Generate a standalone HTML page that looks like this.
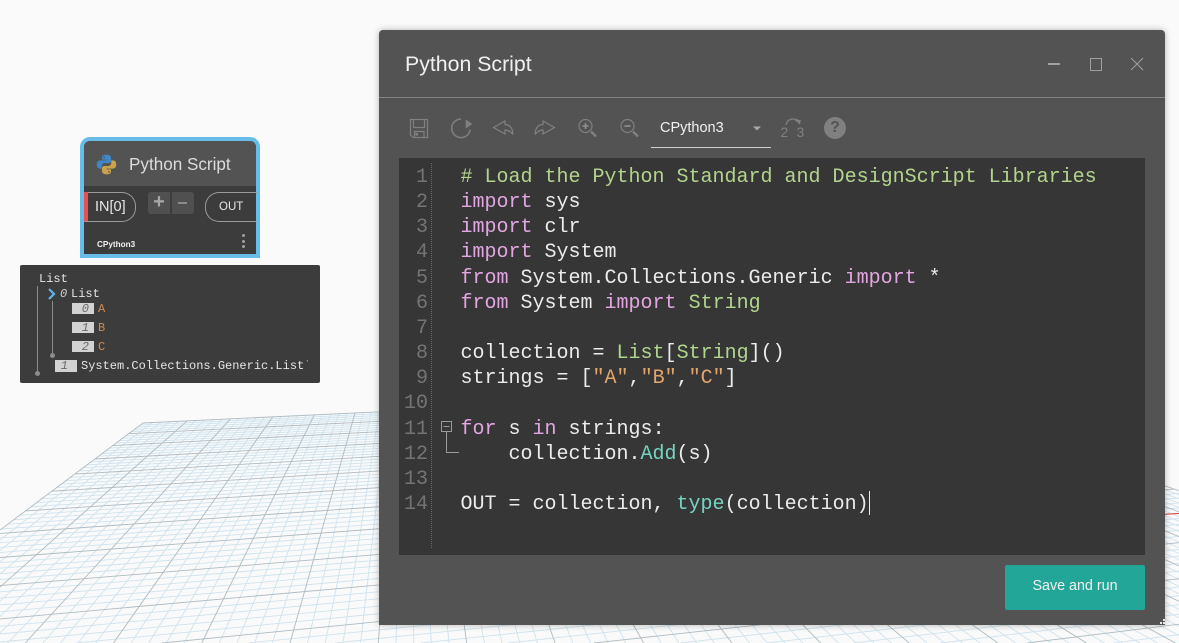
<!DOCTYPE html>
<html lang="en"><head><meta charset="utf-8"><title>Python Script</title>
<style>
html,body{margin:0;padding:0;width:1179px;height:643px;overflow:hidden;background:#fafafa}
body{position:relative;font-family:"Liberation Sans",sans-serif}
#root{position:absolute;left:0;top:0;width:1179px;height:643px;overflow:hidden}
.a{position:absolute}
#grid{position:absolute;left:0;top:0}
.mono{font-family:"Liberation Mono",monospace}
#dlg{position:absolute;left:379px;top:30px;width:786px;height:595px;background:#535353;border-radius:4px 4px 0 0;box-shadow:0 0 7px rgba(0,0,0,.28)}
pre{margin:0;font-family:"Liberation Mono",monospace;font-size:20px;line-height:25.15px}
#code{position:absolute;left:460.5px;top:165px;color:#ececec;white-space:pre}
#nums{position:absolute;left:400px;top:165px;width:28px;text-align:right;color:#747474}
.k{color:#e3a6e3}.c{color:#b3d48c}.t{color:#b0d68e}.s{color:#e3a76c}.m{color:#76d4c2}
.wt{font-family:"Liberation Mono",monospace;font-size:12px;line-height:14px;color:#e6e6e6;position:absolute;white-space:pre}
.idx{position:absolute;background:#d2d2d2;color:#6a6a6a;font:italic 12px/12px "Liberation Mono",monospace;text-align:right;box-sizing:border-box;padding-right:5px}
.or{color:#d2894c}
</style></head><body>
<div id="root">
<svg id="grid" width="1179" height="643" xmlns="http://www.w3.org/2000/svg"></svg>
<svg class="a" style="left:0;top:0" width="1179" height="643"><line x1="1160" y1="514.5" x2="1179" y2="513.5" stroke="#ee3b3b" stroke-width="1"/></svg>

<!-- node -->
<div class="a" style="left:80px;top:137px;width:172px;height:113px;border:4px solid #68bde8;border-radius:10px 10px 0 0;background:#3c3c3c;overflow:hidden">
  <div class="a" style="left:0;top:0;width:172px;height:45px;background:#535353"></div>
</div>
<svg class="a" style="left:96px;top:154px" width="21" height="21" viewBox="0 0 20 20">
  <path fill="#3f87c9" d="M9.8 .6C6 .6 5.7 2.2 5.7 3.4V5.4H10V6.1H3.9C2 6.1 .7 7.6 .7 10c0 2.4 1.2 3.9 3 3.9H5.5V11.6C5.5 9.8 6.8 8.6 8.5 8.6H12C13.4 8.6 14.3 7.6 14.3 6.3V3.4C14.3 1.8 12.6 .6 9.8 .6Z"/>
  <path fill="#c9a24e" d="M10.2 19.4C14 19.4 14.3 17.8 14.3 16.6V14.6H10V13.9H16.1C18 13.9 19.3 12.4 19.3 10c0-2.4-1.2-3.9-3-3.9H14.5V8.4C14.5 10.2 13.2 11.4 11.5 11.4H8C6.6 11.4 5.7 12.4 5.7 13.7V16.6C5.7 18.2 7.4 19.4 10.2 19.4Z"/>
  <circle cx="7.6" cy="3" r=".8" fill="#535353"/><circle cx="12.4" cy="17" r=".8" fill="#535353"/>
</svg>
<div class="a" style="left:129px;top:155px;font-size:17.100px;line-height:20px;color:#dcdcdc;white-space:nowrap">Python Script</div>
<div class="a" style="left:84px;top:192px;width:51px;height:28px;border:1px solid #9a9a9a;border-left:none;border-radius:0 14px 14px 0"></div>
<div class="a" style="left:84px;top:192px;width:4px;height:29px;background:#e8504f"></div>
<div class="a" style="left:95px;top:199px;font-size:14.500px;line-height:16px;color:#e8e8e8;white-space:nowrap">IN[0]</div>
<div class="a" style="left:148px;top:192px;width:22px;height:22px;background:#505050;border-radius:3px 0 0 3px;color:#a8a8a8;font:bold 20px/20px 'Liberation Sans',sans-serif;text-align:center">+</div>
<div class="a" style="left:172px;top:192px;width:22px;height:22px;background:#505050;border-radius:0 3px 3px 0"></div>
<div class="a" style="left:178px;top:202px;width:9px;height:2px;background:#8a8a8a"></div>
<div class="a" style="left:205px;top:192px;width:51px;height:28px;border:1px solid #9a9a9a;border-right:none;border-radius:14px 0 0 14px;box-sizing:content-box"></div>
<div class="a" style="left:219px;top:199px;font-size:11.500px;line-height:16px;color:#e8e8e8;white-space:nowrap">OUT</div>
<div class="a" style="left:97px;top:239px;font-size:8.200px;font-weight:bold;line-height:12px;color:#f0f0f0;white-space:nowrap">CPython3</div>
<div class="a" style="left:242px;top:234px;width:3px;height:3px;background:#a0a0a0;border-radius:50%"></div>
<div class="a" style="left:242px;top:240px;width:3px;height:3px;background:#a0a0a0;border-radius:50%"></div>
<div class="a" style="left:242px;top:245px;width:3px;height:3px;background:#a0a0a0;border-radius:50%"></div>

<!-- watch -->
<div class="a" style="left:20px;top:265px;width:300px;height:118px;background:#3c3c3c;border-radius:2px"></div>
<div class="wt" style="left:39px;top:272px">List</div>
<div class="a" style="left:37px;top:286px;width:1px;height:87px;background:#8c8c8c"></div>
<div class="a" style="left:35px;top:371px;width:5px;height:5px;background:#8c8c8c;border-radius:50%"></div>
<svg class="a" style="left:47px;top:288px" width="10" height="12"><path d="M2 1L7 6L2 11" fill="none" stroke="#5cb6ea" stroke-width="2.2"/></svg>
<div class="wt" style="left:60px;top:287px;font-style:italic;color:#cfcfcf">0</div>
<div class="wt" style="left:71px;top:287px">List</div>
<div class="a" style="left:52px;top:301px;width:1px;height:55px;background:#8c8c8c"></div>
<div class="a" style="left:50px;top:353px;width:5px;height:5px;background:#8c8c8c;border-radius:50%"></div>
<div class="idx" style="left:72px;top:303px;width:22px;height:11px">0</div>
<div class="wt or" style="left:98px;top:302px">A</div>
<div class="idx" style="left:72px;top:322px;width:22px;height:11px">1</div>
<div class="wt or" style="left:98px;top:321px">B</div>
<div class="idx" style="left:72px;top:341px;width:22px;height:11px">2</div>
<div class="wt or" style="left:98px;top:340px">C</div>
<div class="idx" style="left:55px;top:360px;width:22px;height:12px;padding-right:9px">1</div>
<div class="wt" style="left:81px;top:359px;width:227px;overflow:hidden">System.Collections.Generic.List`</div>

<!-- dialog -->
<div id="dlg"></div>
<div class="a" style="left:405px;top:51px;font-size:21.300px;line-height:26px;color:#f0f0f0;white-space:nowrap">Python Script</div>
<div class="a" style="left:379px;top:97px;width:786px;height:1px;background:#818181"></div>
<div class="a" style="left:1048px;top:63px;width:12px;height:2px;background:#a0a0a0"></div>
<div class="a" style="left:1090px;top:58px;width:10px;height:11px;border:1px solid #a0a0a0"></div>
<svg class="a" style="left:1129px;top:56px" width="16" height="16"><path d="M2 2L14 14M14 2L2 14" stroke="#a0a0a0" stroke-width="1"/></svg>

<svg class="a" style="left:400px;top:110px" width="450" height="40" fill="none" stroke="#808080" stroke-width="1.2">
  <!-- save -->
  <path d="M10.5 9.5H27.5V27.5H13L10.5 25Z"/>
  <path d="M13.5 9.5V17.5H24.5V9.5"/>
  <path d="M14.5 27.5V21.5H24V27.5"/>
  <rect x="15.5" y="23" width="2.5" height="2.5" fill="#808080" stroke="none"/>
  <!-- refresh -->
  <path d="M61 9A9.300 9.300 0 1 0 70.200 19.500" stroke-width="1.5"/>
  <path d="M65.700 9.500L72.300 14L65.700 18.500Z" fill="#808080" stroke="none"/>
  <!-- undo -->
  <path d="M93.500 17.500L105 11V14.500C110 14.500 113 19 112.700 24C110 21 108 20 105 20V24Z"/>
  <!-- redo -->
  <path d="M154.500 17.500L143 11V14.500C138 14.500 135 19 135.300 24C138 21 140 20 143 20V24Z"/>
  <!-- zoom in -->
  <circle cx="185.500" cy="16" r="6.500"/>
  <path d="M182.500 16H188.500M185.500 13V19" stroke-width="1.600" stroke="#909090"/>
  <path d="M191 21.500L196 26.500" stroke-width="2.400"/>
  <!-- zoom out -->
  <circle cx="227.500" cy="16" r="6.500"/>
  <path d="M224.500 16H230.500" stroke-width="1.600" stroke="#909090"/>
  <path d="M233 21.500L238 26.500" stroke-width="2.400"/>
  <!-- caret -->
  <path d="M353 16.500H361L357 20.500Z" fill="#a8a8a8" stroke="none"/>
  <!-- convert arc -->
  <path d="M386 15C387 10.500 390 9 393 9C396 9 398.500 10 400 12"/>
  <path d="M394.500 10L400.800 10L400 14.500Z" fill="#808080" stroke="none"/>
  <!-- help -->
  <circle cx="435" cy="18" r="11" fill="#808080" stroke="none"/>
</svg>
<div class="a" style="left:780.500px;top:124px;font-size:14px;line-height:16px;color:#808080">2</div>
<div class="a" style="left:796.500px;top:124px;font-size:14px;line-height:16px;color:#808080">3</div>
<div class="a" style="left:824px;top:117px;width:22px;text-align:center;font-size:16px;font-weight:bold;line-height:22px;color:#535353">?</div>
<div class="a" style="left:660px;top:120px;font-size:14.500px;line-height:17px;color:#f0f0f0;white-space:nowrap">CPython3</div>
<div class="a" style="left:651px;top:147px;width:120px;height:1px;background:#cfcfcf"></div>

<!-- editor -->
<div class="a" style="left:399px;top:158px;width:746px;height:397px;background:#363636"></div>
<pre id="nums">1
2
3
4
5
6
7
8
9
10
11
12
13
14</pre>
<div class="a" style="left:431px;top:163px;height:385px;border-left:1px dotted #6a6a6a"></div>
<svg class="a" style="left:438px;top:418px" width="26" height="40" fill="none" stroke="#9a9a9a">
  <rect x="3.500" y="3.500" width="10" height="10"/>
  <path d="M5.500 8.500H11.500"/>
  <path d="M8.500 14V34.500H21"/>
</svg>
<pre id="code"><span class="c"># Load the Python Standard and DesignScript Libraries</span>
<span class="k">import</span> sys
<span class="k">import</span> clr
<span class="k">import</span> System
<span class="k">from</span> System.Collections.Generic <span class="k">import</span> *
<span class="k">from</span> System <span class="k">import</span> <span class="t">String</span>

collection = <span class="t">List</span>[<span class="t">String</span>]()
strings = [<span class="s">"A"</span>,<span class="s">"B"</span>,<span class="s">"C"</span>]

<span class="k">for</span> s <span class="k">in</span> strings:
    collection.<span class="m">Add</span>(s)

OUT = collection, <span class="m">type</span>(collection)</pre>
<div class="a" style="left:869px;top:491px;width:1px;height:24px;background:#f0f0f0"></div>

<!-- button -->
<div class="a" style="left:1005px;top:565px;width:140px;height:45px;background:#22a697;border-radius:2px;color:#f2f2f2;font-size:14.300px;line-height:43px;text-align:center">Save and run</div>
<svg class="a" style="left:1156px;top:616px" width="12" height="12" fill="#e8e8e8"><rect x="7" y="3" width="2" height="2"/><rect x="4" y="6" width="2" height="2"/><rect x="7" y="6" width="2" height="2"/></svg>
</div>

<script>
(function(){
var a=230.36,b=-208.92,c=143,d=11.36,e=-114.88,f=423,g=0.05173,h=-0.5117;
function P(u,v){var w=g*u+h*v+1;return[(a*u+b*v+c)/w,(d*u+e*v+f)/w];}
var U=4,V=1.5,W=1179,H=643;
function L(p,q,col){
  var t0=0,t1=1,dx=q[0]-p[0],dy=q[1]-p[1];
  var P2=[-dx,dx,-dy,dy],Q=[p[0],W-p[0],p[1],H-p[1]];
  for(var k=0;k<4;k++){
    if(P2[k]==0){if(Q[k]<0)return '';}
    else{var r=Q[k]/P2[k];
      if(P2[k]<0){if(r>t0)t0=r;}else{if(r<t1)t1=r;}}
  }
  if(t0>=t1)return '';
  return '<line x1="'+(p[0]+t0*dx).toFixed(1)+'" y1="'+(p[1]+t0*dy).toFixed(1)+'" x2="'+(p[0]+t1*dx).toFixed(1)+'" y2="'+(p[1]+t1*dy).toFixed(1)+'" stroke="'+col+'" stroke-width="0.9"/>';
}
var minor='#cfe3ee',major='#aebbc2',sm='',sM='',i;
for(i=0;i<=100;i++){var u=i*0.04;var t=L(P(u,0),P(u,V),i%5==0?major:minor);if(i%5==0)sM+=t;else sm+=t;}
for(i=0;i<=75;i++){var v=i*0.02;var t2=L(P(0,v),P(U,v),i%5==0?major:minor);if(i%5==0)sM+=t2;else sm+=t2;}
document.getElementById('grid').innerHTML=sm+sM;
})();
</script>
</body></html>
